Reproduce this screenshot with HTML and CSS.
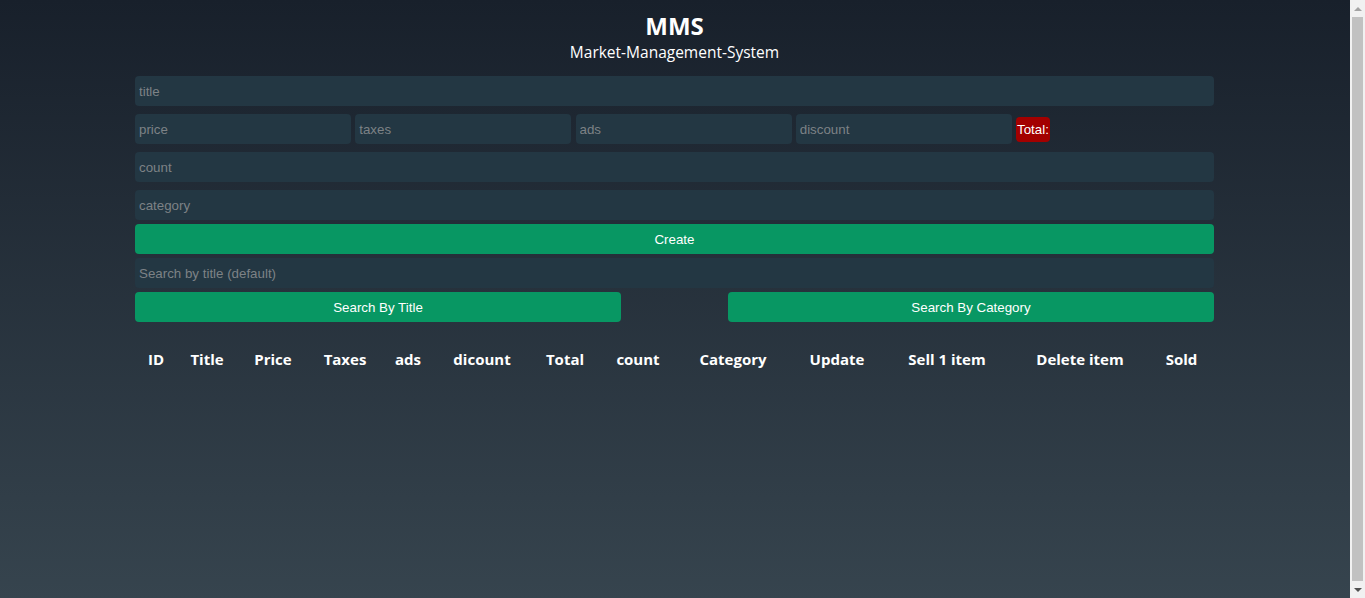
FILE: index.html
```html
<!DOCTYPE html>
<html lang="en">
<head>
<meta charset="utf-8">
<title>MMS</title>
<link rel="stylesheet" href="styles.css">
</head>
<body>
<main class="page">
  <div class="crud">
    <header class="head">
      <h2 class="logo">MMS</h2>
      <p class="sub">Market-Management-System</p>
    </header>
    <div class="form">
      <input class="field" type="text" placeholder="title">
      <div class="price-row">
        <input class="field cell" type="text" placeholder="price">
        <input class="field cell" type="text" placeholder="taxes">
        <input class="field cell" type="text" placeholder="ads">
        <input class="field cell" type="text" placeholder="discount">
        <small class="total">Total:</small>
      </div>
      <input class="field" type="text" placeholder="count">
      <input class="field" type="text" placeholder="category">
    </div>
    <div class="actions">
      <button class="btn">Create</button>
      <input class="field" type="text" placeholder="Search by title (default)">
      <div class="search-btns">
        <button class="btn half">Search By Title</button>
        <button class="btn half">Search By Category</button>
      </div>
    </div>
    <table class="output">
      <thead>
        <tr>
          <th class="c-id">ID</th>
          <th class="c-title">Title</th>
          <th class="c-price">Price</th>
          <th class="c-taxes">Taxes</th>
          <th class="c-ads">ads</th>
          <th class="c-disc">dicount</th>
          <th class="c-total">Total</th>
          <th class="c-count">count</th>
          <th class="c-cat">Category</th>
          <th class="c-upd">Update</th>
          <th class="c-sell">Sell 1 item</th>
          <th class="c-del">Delete item</th>
          <th class="c-sold">Sold</th>
        </tr>
      </thead>
      <tbody></tbody>
    </table>
  </div>
</main>
<aside class="scrollbar" aria-hidden="true">
  <div class="sb-arrow sb-up"></div>
  <div class="sb-track"><div class="sb-thumb"></div></div>
  <div class="sb-arrow sb-down"></div>
</aside>
</body>
</html>
```

FILE: styles.css
```css
* { box-sizing: border-box; }
html {
  height: 100%;
  background: linear-gradient(#18202b, #36444e);
}
body {
  margin: 0;
  height: 100vh;
  overflow: hidden;
  display: flex;
  color: #fff;
  font-family: "Open Sans", "Noto Sans", sans-serif;
}
.page {
  flex: 1;
  min-width: 0;
  padding-right: 1px;
}
.crud {
  width: 1079px;
  margin: 0 auto;
}
.head {
  text-align: center;
  padding-top: 11px;
}
.logo {
  margin: 0;
  font-size: 24px;
  line-height: 30px;
  font-weight: 700;
}
.sub {
  margin: 0;
  font-size: 15.5px;
  line-height: 22px;
}
.form {
  margin-top: 13px;
  display: flex;
  flex-direction: column;
  gap: 8px;
}
.field {
  display: block;
  width: 100%;
  height: 30px;
  margin: 0;
  padding: 1px 4px;
  border: none;
  outline: none;
  border-radius: 4px;
  background: #233743;
  color: #fff;
  font-family: "Liberation Sans", Arial, sans-serif;
  font-size: 13.333px;
}
.field::placeholder { color: #7d8286; }
.price-row {
  display: flex;
  align-items: center;
  gap: 4.25px;
}
.price-row .cell {
  width: 216px;
  flex: 0 0 auto;
}
.total {
  background: #a30000;
  color: #fff;
  border-radius: 4px;
  padding: 5px 1px 4px;
  font-family: "Liberation Sans", Arial, sans-serif;
  font-size: 13.333px;
  line-height: 16px;
}
.actions {
  margin-top: 4px;
  display: flex;
  flex-direction: column;
  gap: 4px;
}
.btn {
  display: block;
  width: 100%;
  height: 30px;
  margin: 0;
  border: none;
  border-radius: 4px;
  background: #089763;
  color: #fff;
  font-family: "Liberation Sans", Arial, sans-serif;
  font-size: 13.333px;
  cursor: pointer;
}
.search-btns {
  display: flex;
  justify-content: space-between;
}
.search-btns .half { width: 486px; }
.output {
  width: 100%;
  margin-top: 23px;
  border-collapse: collapse;
  table-layout: fixed;
}
.output th {
  padding: 4px 0;
  font-size: 15px;
  line-height: 21px;
  font-weight: 700;
  text-align: center;
  white-space: nowrap;
}
.c-id { width: 42px; }
.c-title { width: 60px; }
.c-price { width: 72px; }
.c-taxes { width: 72px; }
.c-ads { width: 54px; }
.c-disc { width: 94px; }
.c-total { width: 72px; }
.c-count { width: 74px; }
.c-cat { width: 116px; }
.c-upd { width: 92px; }
.c-sell { width: 128px; }
.c-del { width: 138px; }
.c-sold { width: 65px; }

.scrollbar {
  flex: 0 0 15px;
  height: 100vh;
  background: #f1f1f1;
  display: flex;
  flex-direction: column;
}
.sb-arrow {
  flex: 0 0 17px;
  display: flex;
  align-items: center;
  justify-content: center;
}
.sb-up::before,
.sb-down::before {
  content: "";
  width: 0;
  height: 0;
  border-left: 4px solid transparent;
  border-right: 4px solid transparent;
}
.sb-up::before { border-bottom: 4px solid #a3a3a3; }
.sb-down::before { border-top: 4px solid #505050; }
.sb-track {
  flex: 1;
  padding: 0 2px;
}
.sb-thumb {
  height: 100%;
  background: #c1c1c1;
}
```
